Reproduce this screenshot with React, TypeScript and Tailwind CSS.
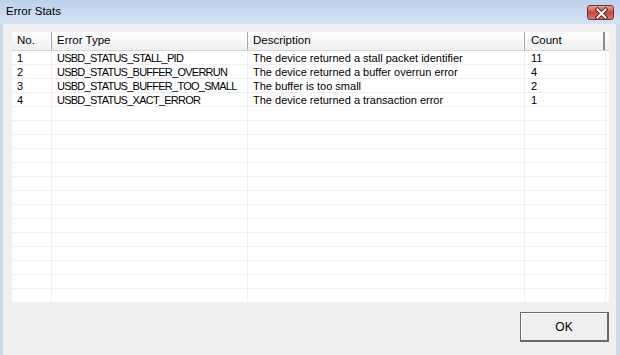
import * as React from "react"

type ErrorRow = {
  no: string
  type: string
  description: string
  count: string
}

const rows: ErrorRow[] = [
  {
    no: "1",
    type: "USBD_STATUS_STALL_PID",
    description: "The device returned a stall packet identifier",
    count: "11",
  },
  {
    no: "2",
    type: "USBD_STATUS_BUFFER_OVERRUN",
    description: "The device returned a buffer overrun error",
    count: "4",
  },
  {
    no: "3",
    type: "USBD_STATUS_BUFFER_TOO_SMALL",
    description: "The buffer is too small",
    count: "2",
  },
  {
    no: "4",
    type: "USBD_STATUS_XACT_ERROR",
    description: "The device returned a transaction error",
    count: "1",
  },
]

const TOTAL_ROWS = 18

const CloseIcon = () => (
  <svg viewBox="0 0 27 15" className="block h-[15px] w-[27px]" aria-hidden="true">
    <path
      d="M9.5 3.5L17.5 11.5M17.5 3.5L9.5 11.5"
      stroke="#5a2020"
      strokeWidth="4"
      strokeLinecap="square"
    />
    <path
      d="M9.5 3.5L17.5 11.5M17.5 3.5L9.5 11.5"
      stroke="#ffffff"
      strokeWidth="2"
      strokeLinecap="square"
    />
  </svg>
)

function HeaderCell({
  label,
  className,
}: {
  label: string
  className?: string
}) {
  return (
    <div
      className={`flex h-full items-center border-r border-r-[#a5a5a5] pl-[5px] shadow-[inset_-1px_0_0_#ffffff] ${className ?? ""}`}
    >
      {label}
    </div>
  )
}

export default function App() {
  const bodyRows = Array.from({ length: TOTAL_ROWS }, (_, i) => rows[i])

  return (
    <div
      className="flex h-[355px] w-[620px] flex-col overflow-hidden bg-[#c9daef] text-[11px] text-black"
      style={{ fontFamily: '"Liberation Sans", Arial, sans-serif' }}
    >
      {/* title bar */}
      <div className="flex h-[24px] shrink-0 items-center justify-between bg-gradient-to-b from-[#bdd1ea] to-[#d6e3f3] pl-[6px] pr-[6px]">
        <span className="text-[11.5px] leading-none text-black">Error Stats</span>
        <div className="h-[15px] w-[27px] overflow-hidden rounded-[3px] border border-[#6b2f2f] bg-gradient-to-b from-[#e4a397] via-[#c9473a] to-[#d77a6c]">
          <CloseIcon />
        </div>
      </div>

      {/* client area */}
      <div className="ml-[3px] mr-[4px] flex flex-1 flex-col bg-[#f0f0f0] pl-[9px] pr-[7px] pt-[8px]">
        <div className="flex flex-col bg-white">
          <div className="flex h-[19px] border-b border-b-[#d5d5d5] bg-gradient-to-b from-[#ffffff] to-[#eeeff1] text-[11.5px]">
            <HeaderCell label="No." className="w-[40px]" />
            <HeaderCell label="Error Type" className="w-[196px]" />
            <HeaderCell label="Description" className="w-[277px]" />
            <div className="flex h-full w-[80px] items-center border-r-2 border-r-[#8e8e8e] pl-[6px]">
              Count
            </div>
            <div className="flex-1" />
          </div>
          {bodyRows.map((row, i) => (
            <div key={i} className="flex h-[14px] border-b border-b-[#f0f0f0] leading-[14px] whitespace-nowrap">
              <div className="w-[40px] overflow-hidden border-r border-r-[#f0f0f0] pl-[5px]">{row?.no}</div>
              <div className="w-[196px] overflow-hidden border-r border-r-[#f0f0f0] pl-[5px] tracking-[-0.75px]">{row?.type}</div>
              <div className="w-[277px] overflow-hidden border-r border-r-[#f0f0f0] pl-[5px]">{row?.description}</div>
              <div className="w-[81px] overflow-hidden border-r border-r-[#f0f0f0] pl-[6px]">{row?.count}</div>
              <div className="flex-1" />
            </div>
          ))}
        </div>

        <div className="mt-[9px] flex justify-end">
          <button
            type="button"
            className="flex h-[30px] w-[89px] items-center justify-center border border-r-2 border-b-2 border-[#6a6a6a] bg-[#efefef] text-[12px] text-black shadow-[inset_1px_1px_0_#ffffff]"
          >
            OK
          </button>
        </div>
      </div>
    </div>
  )
}
